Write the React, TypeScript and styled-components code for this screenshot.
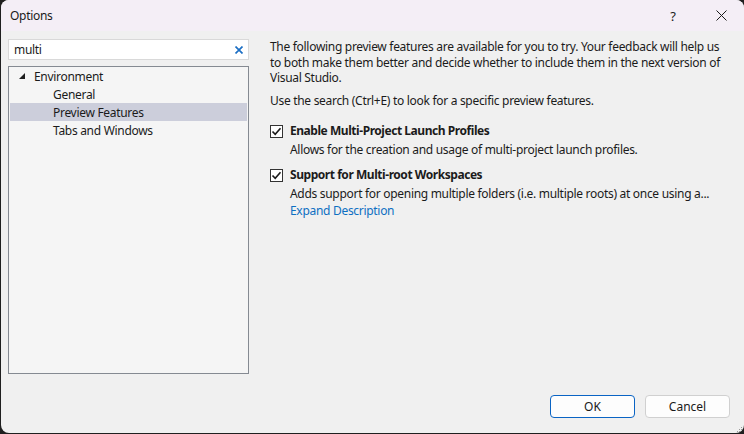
import styled, { createGlobalStyle } from 'styled-components';

const GlobalStyle = createGlobalStyle`
    html, body {
        margin: 0;
        padding: 0;
        background: #1f1f1f;
        width: 744px;
        height: 434px;
        overflow: hidden;
    }
    * { box-sizing: border-box; }
`

const Window = styled.div`
    margin-left: 1px;
    width: 743px;
    height: 433px;
    border-radius: 8px;
    overflow: hidden;
    background: #f0f0f0;
    display: flex;
    flex-direction: column;
    font-family: "Noto Sans", "Open Sans", sans-serif;
    font-size: 12px;
    letter-spacing: -0.3px;
    color: #1b1b1b;
    position: relative;
`

const TitleBar = styled.div`
    height: 31px;
    background: #f4eef6;
    display: flex;
    align-items: center;
    padding-left: 9px;
`

const Title = styled.span`
    flex: 1;
    font-size: 12px;
    color: #1a1a1a;
`

const TitleButton = styled.div<{ $width: number }>`
    width: ${p => p.$width}px;
    height: 31px;
    display: flex;
    align-items: center;
    justify-content: center;
    font-size: 13px;
    color: #1a1a1a;
`

const Body = styled.div`
    flex: 1;
    display: flex;
    flex-direction: column;
    padding: 8px 14px 16px 7px;
`

const Main = styled.div`
    flex: 1;
    display: flex;
    gap: 21px;
`

const LeftColumn = styled.div`
    width: 241px;
    flex-shrink: 0;
    display: flex;
    flex-direction: column;
    gap: 6px;
`

const SearchBox = styled.div`
    height: 21px;
    background: #ffffff;
    border: 1px solid #d9d9d9;
    display: flex;
    align-items: center;
    padding: 0 5px 0 5px;
`

const SearchText = styled.span`
    flex: 1;
`

const Tree = styled.div`
    height: 308px;
    background: #f5f5f5;
    border: 1px solid #858a92;
    padding: 0 1px;
`

const TreeRow = styled.div<{ $indent: number; $selected?: boolean }>`
    height: 18px;
    display: flex;
    align-items: center;
    padding-left: ${p => p.$indent}px;
    background: ${p => (p.$selected ? '#cccedb' : 'transparent')};
`

const Expander = styled.span`
    width: 15px;
    display: flex;
    align-items: center;
`

const RightPanel = styled.div`
    flex: 1;
    min-width: 0;
    display: flex;
    flex-direction: column;
`

const Paragraph = styled.p`
    margin: 0;
    line-height: 15.5px;
`

const Hint = styled.p`
    margin: 7px 0 0 0;
    line-height: 15.5px;
`

const Feature = styled.div<{ $gap: number }>`
    display: grid;
    grid-template-columns: 20px 1fr;
    margin-top: ${p => p.$gap}px;
`

const FeatureTitle = styled.div`
    font-weight: 700;
    letter-spacing: -0.45px;
    line-height: 16px;
`

const FeatureDesc = styled.div`
    line-height: 16px;
    margin-top: 3px;
    white-space: nowrap;
`

const Link = styled.div`
    color: #0e6fc2;
    line-height: 16px;
    margin-top: 1px;
`

const CheckBox = styled.div`
    width: 13px;
    height: 13px;
    border: 1px solid #333333;
    background: #ffffff;
    margin-top: 2px;
    display: flex;
    align-items: center;
    justify-content: center;
`

const Footer = styled.div`
    display: flex;
    justify-content: flex-end;
    gap: 10px;
    margin-top: 21px;
`

const Button = styled.button<{ $primary?: boolean }>`
    width: 85px;
    height: 23px;
    border-radius: 4px;
    background: #fdfdfd;
    border: 1px solid ${p => (p.$primary ? '#0a64c4' : '#d0d0d0')};
    font-family: inherit;
    font-size: 12px;
    color: #1a1a1a;
    padding: 0;
`

const Grip = styled.div`
    position: absolute;
    right: 1px;
    bottom: 1px;
    width: 10px;
    height: 10px;
`

function Check() {
    return (
        <svg width="11" height="11" viewBox="0 0 11 11">
            <path d="M1.5 5.5 L4.2 8.3 L9.5 2.2" fill="none" stroke="#1a1a1a" strokeWidth="1.6" />
        </svg>
    );
}

export default function App() {
    return (
        <>
            <GlobalStyle />
            <Window>
                <TitleBar>
                    <Title>Options</Title>
                    <TitleButton $width={50}>?</TitleButton>
                    <TitleButton $width={46}>
                        <svg width="11" height="11" viewBox="0 0 11 11">
                            <path d="M0.5 0.5 L10.5 10.5 M10.5 0.5 L0.5 10.5" stroke="#1a1a1a" strokeWidth="1" />
                        </svg>
                    </TitleButton>
                </TitleBar>
                <Body>
                    <Main>
                        <LeftColumn>
                            <SearchBox>
                                <SearchText>multi</SearchText>
                                <svg width="8" height="8" viewBox="0 0 8 8">
                                    <path d="M0.5 0.5 L7.5 7.5 M7.5 0.5 L0.5 7.5" stroke="#1c6fc4" strokeWidth="1.7" />
                                </svg>
                            </SearchBox>
                            <Tree>
                                <TreeRow $indent={9}>
                                    <Expander>
                                        <svg width="6" height="6" viewBox="0 0 6 6">
                                            <polygon points="6,0 6,6 0,6" fill="#1e1e1e" />
                                        </svg>
                                    </Expander>
                                    Environment
                                </TreeRow>
                                <TreeRow $indent={43}>General</TreeRow>
                                <TreeRow $indent={43} $selected>Preview Features</TreeRow>
                                <TreeRow $indent={43}>Tabs and Windows</TreeRow>
                            </Tree>
                        </LeftColumn>
                        <RightPanel>
                            <Paragraph>
                                The following preview features are available for you to try. Your feedback will help us
                                to both make them better and decide whether to include them in the next version of
                                Visual Studio.
                            </Paragraph>
                            <Hint>Use the search (Ctrl+E) to look for a specific preview features.</Hint>
                            <Feature $gap={15}>
                                <CheckBox><Check /></CheckBox>
                                <div>
                                    <FeatureTitle>Enable Multi-Project Launch Profiles</FeatureTitle>
                                    <FeatureDesc>Allows for the creation and usage of multi-project launch profiles.</FeatureDesc>
                                </div>
                            </Feature>
                            <Feature $gap={9}>
                                <CheckBox><Check /></CheckBox>
                                <div>
                                    <FeatureTitle>Support for Multi-root Workspaces</FeatureTitle>
                                    <FeatureDesc>Adds support for opening multiple folders (i.e. multiple roots) at once using a...</FeatureDesc>
                                    <Link>Expand Description</Link>
                                </div>
                            </Feature>
                        </RightPanel>
                    </Main>
                    <Footer>
                        <Button $primary>OK</Button>
                        <Button>Cancel</Button>
                    </Footer>
                </Body>
                <Grip>
                    <svg width="10" height="10" viewBox="0 0 10 10">
                        <g fill="#9a9a9a">
                            <rect x="8" y="2" width="1" height="1" />
                            <rect x="6" y="4" width="1" height="1" />
                            <rect x="8" y="4" width="1" height="1" />
                            <rect x="4" y="6" width="1" height="1" />
                            <rect x="6" y="6" width="1" height="1" />
                            <rect x="8" y="6" width="1" height="1" />
                            <rect x="2" y="8" width="1" height="1" />
                            <rect x="4" y="8" width="1" height="1" />
                            <rect x="6" y="8" width="1" height="1" />
                            <rect x="8" y="8" width="1" height="1" />
                        </g>
                    </svg>
                </Grip>
            </Window>
        </>
    );
}
